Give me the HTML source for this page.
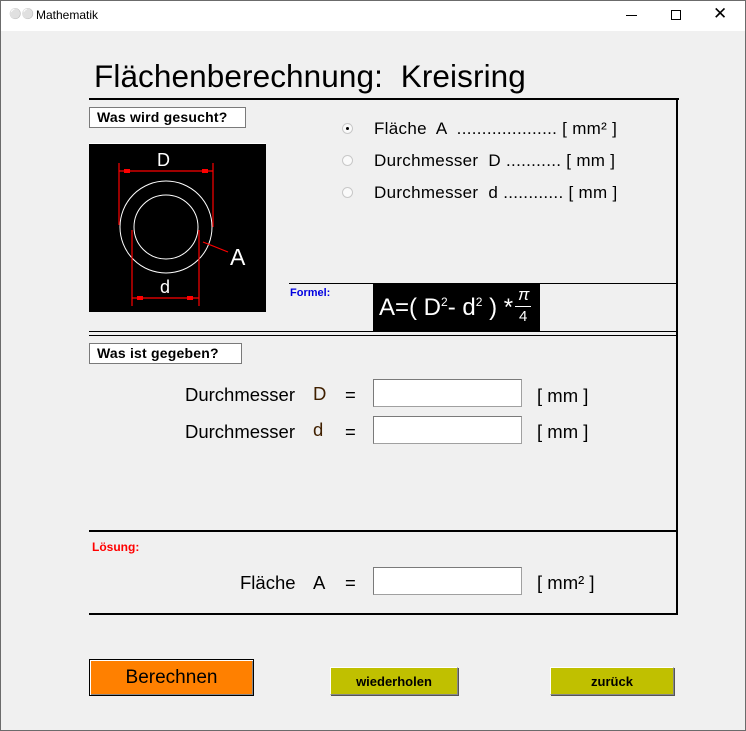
<!DOCTYPE html>
<html><head><meta charset="utf-8"><style>
*{margin:0;padding:0;box-sizing:border-box}
body{width:746px;height:731px;background:#f0f0f0;font-family:"Liberation Sans",Arial,sans-serif;position:relative;overflow:hidden}
.a{position:absolute;white-space:nowrap}
.win{position:absolute;left:0;top:0;width:746px;height:731px;border:1px solid #6b6b6b}
.tb{position:absolute;left:1px;top:1px;width:744px;height:30px;background:#fff}
.ln{position:absolute;background:#000}
.lbl{position:absolute;border:1px solid #7a7a7a;background:#fff;font-weight:bold;font-size:14px;padding:1px 0 0 7px;height:21px;letter-spacing:0.2px}
.inp{position:absolute;background:#fff;border:1px solid #a0a0a0;border-top-color:#7a7a7a;border-left-color:#7a7a7a;width:149px;height:28px}
.t17{font-size:18.5px}
.rad{position:absolute;width:11px;height:11px;border-radius:50%;background:#fafafa;border:1px solid #c8c8c8}
.btn{position:absolute;font-weight:bold;font-size:13px;text-align:center;background:#c0c000;border:1px solid #888;border-top-color:#fff;border-left-color:#fff;box-shadow:1px 1px 0 #555}
</style></head><body>
<div class="win"></div>
<div class="tb"></div>
<div class="a" style="left:9px;top:9px;font-size:10px;color:#888">&#9898;&#9898;</div>
<div class="a" style="left:36px;top:8px;font-size:12px;color:#000">Mathematik</div>
<div class="a" style="left:626px;top:15px;width:11px;height:1px;background:#000"></div>
<div class="a" style="left:671px;top:10px;width:10px;height:10px;border:1px solid #000"></div>
<div class="a" style="left:713px;top:4px;font-size:17px;color:#000">&#10005;</div>

<div class="a" style="left:94px;top:58px;font-size:31.5px;letter-spacing:0.1px">Flächenberechnung:&nbsp; Kreisring</div>
<div class="ln" style="left:89px;top:98px;width:590px;height:2px"></div>
<div class="ln" style="left:676px;top:98px;width:2px;height:517px"></div>
<div class="lbl" style="left:89px;top:107px;width:157px">Was wird gesucht?</div>

<svg class="a" style="left:89px;top:143px" width="177" height="169">
<rect x="0" y="0" width="177" height="169" fill="#000"/>
<rect x="0" y="0" width="177" height="1" fill="#fff"/>
<circle cx="77" cy="84" r="46" fill="none" stroke="#fff" stroke-width="1"/>
<circle cx="77" cy="84" r="32" fill="none" stroke="#fff" stroke-width="1"/>
<g stroke="#f00" stroke-width="1.2">
<line x1="30" y1="20" x2="30" y2="82"/><line x1="30" y1="28" x2="124" y2="28"/><line x1="124" y1="20" x2="124" y2="84"/>
<line x1="43" y1="87" x2="43" y2="163"/><line x1="43" y1="155" x2="110" y2="155"/><line x1="110" y1="87" x2="110" y2="163"/>
<line x1="114" y1="99" x2="139" y2="109"/>
</g>
<g fill="#f00"><rect x="35" y="26" width="6" height="4"/><rect x="113" y="26" width="6" height="4"/><rect x="48" y="153" width="6" height="4"/><rect x="98" y="153" width="6" height="4"/></g>
<text x="68" y="23" fill="#fff" font-family="Liberation Sans" font-size="18">D</text>
<text x="71" y="150" fill="#fff" font-family="Liberation Sans" font-size="18">d</text>
<text x="141" y="122" fill="#fff" font-family="Liberation Sans" font-size="23">A</text>
</svg>

<div class="rad" style="left:342px;top:123px"><div style="position:absolute;left:3px;top:3px;width:3px;height:3px;background:#000;border-radius:50%"></div></div>
<div class="rad" style="left:342px;top:155px"></div>
<div class="rad" style="left:342px;top:187px"></div>
<div class="a" style="left:374px;top:119px;font-size:17px;letter-spacing:0.3px">Fläche&nbsp; A &nbsp;.................... [ mm² ]</div>
<div class="a" style="left:374px;top:151px;font-size:17px;letter-spacing:0.3px">Durchmesser&nbsp; D ........... [ mm ]</div>
<div class="a" style="left:374px;top:183px;font-size:17px;letter-spacing:0.3px">Durchmesser&nbsp; d ............ [ mm ]</div>

<div class="ln" style="left:289px;top:283px;width:389px;height:1px"></div>
<div class="a" style="left:290px;top:287px;font-size:11px;font-weight:bold;color:#0000e0">Formel:</div>
<div class="a" style="left:373px;top:283px;width:167px;height:48px;background:#000;color:#fff">
<span class="a" style="left:6px;top:11px;font-size:24px">A=( D<sup style="font-size:12px">2</sup>- d<sup style="font-size:12px">2</sup> ) *</span>
<span class="a" style="left:145px;top:2px;font-size:17px;font-style:italic">π</span>
<span class="a" style="left:142px;top:23px;width:16px;height:1px;background:#fff"></span>
<span class="a" style="left:146px;top:25px;font-size:15px">4</span>
</div>
<div class="ln" style="left:89px;top:331px;width:589px;height:1px"></div>
<div class="ln" style="left:89px;top:335px;width:589px;height:1px"></div>

<div class="lbl" style="left:89px;top:343px;width:153px">Was ist gegeben?</div>
<div class="a t17" style="left:185px;top:384px">Durchmesser</div>
<div class="a t17" style="left:313px;top:383px;color:#402000">D</div>
<div class="a t17" style="left:345px;top:384px">=</div>
<div class="inp" style="left:373px;top:379px"></div>
<div class="a t17" style="left:537px;top:385px">[ mm ]</div>
<div class="a t17" style="left:185px;top:421px">Durchmesser</div>
<div class="a t17" style="left:313px;top:419px;color:#402000">d</div>
<div class="a t17" style="left:345px;top:421px">=</div>
<div class="inp" style="left:373px;top:416px"></div>
<div class="a t17" style="left:537px;top:421px">[ mm ]</div>

<div class="ln" style="left:89px;top:530px;width:589px;height:2px"></div>
<div class="a" style="left:92px;top:540px;font-size:12px;font-weight:bold;color:#f00">Lösung:</div>
<div class="a t17" style="left:240px;top:572px">Fläche</div>
<div class="a t17" style="left:313px;top:572px">A</div>
<div class="a t17" style="left:345px;top:572px">=</div>
<div class="inp" style="left:373px;top:567px"></div>
<div class="a t17" style="left:537px;top:572px">[ mm² ]</div>
<div class="ln" style="left:89px;top:613px;width:589px;height:2px"></div>

<div class="a" style="left:89px;top:659px;width:165px;height:37px;border:1px solid #000;background:#ff8000;box-shadow:inset 1px 1px 0 #fff,inset -1px -1px 0 #888;font-size:19px;text-align:center;line-height:35px">Berechnen</div>
<div class="btn" style="left:330px;top:667px;width:128px;height:28px;line-height:27px">wiederholen</div>
<div class="btn" style="left:550px;top:667px;width:124px;height:28px;line-height:27px">zurück</div>
</body></html>
